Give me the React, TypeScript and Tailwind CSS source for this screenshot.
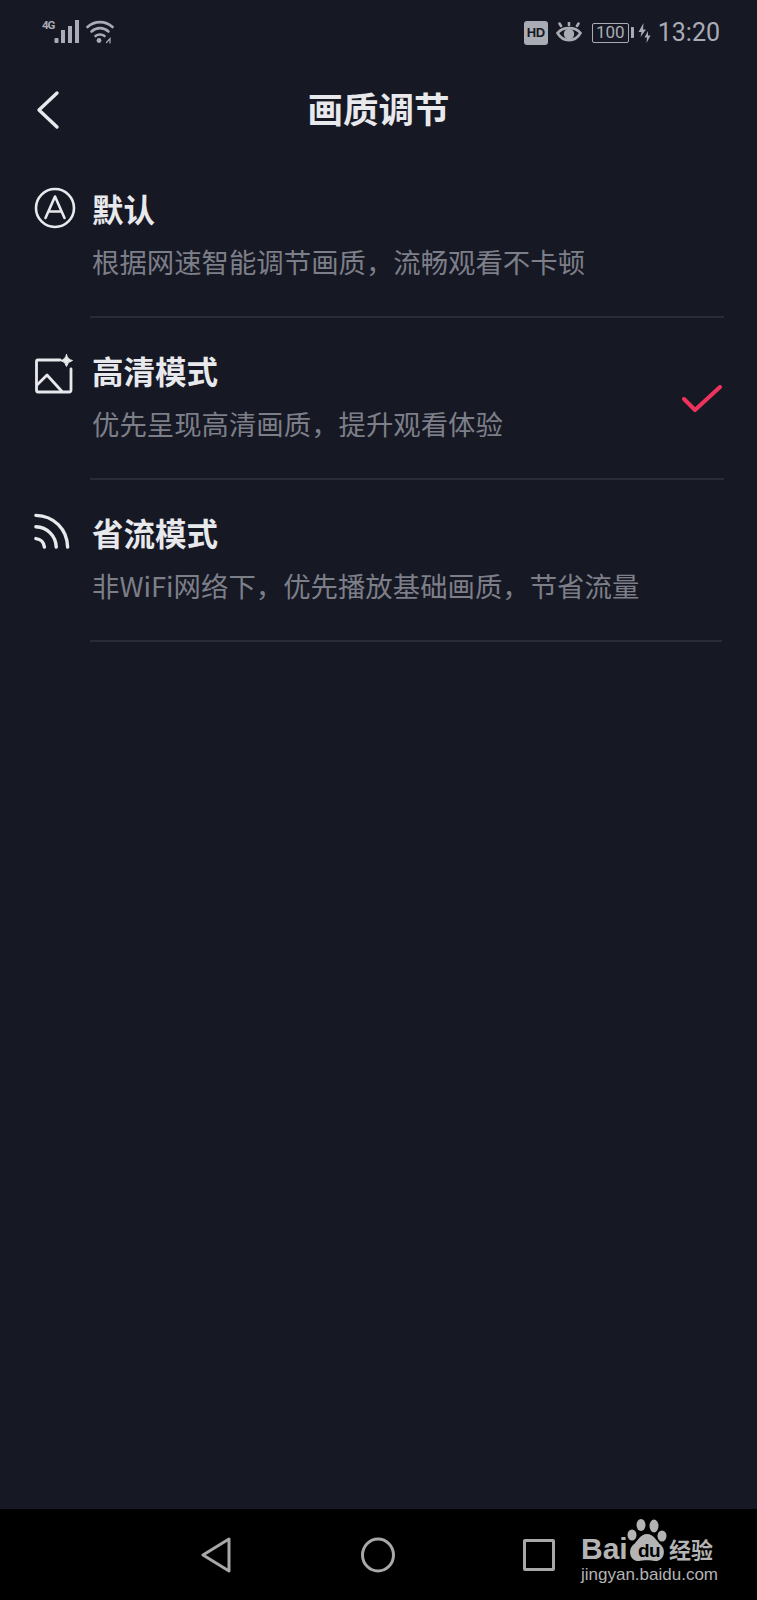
const CJK = "font-['Noto_Sans_CJK_SC','Noto_Sans',sans-serif]"

const ROWS = [
  { title: '默认', desc: '根据网速智能调节画质，流畅观看不卡顿', icon: 'auto' },
  { title: '高清模式', desc: '优先呈现高清画质，提升观看体验', icon: 'hd', checked: true },
  { title: '省流模式', desc: '非WiFi网络下，优先播放基础画质，节省流量', icon: 'save' },
]

function RowIcon({ name }: { name: string }) {
  if (name === 'auto') {
    return (
      <svg width="42" height="42" viewBox="0 0 42 42" fill="none" stroke="#e8e9ec" strokeWidth="2.6" strokeLinecap="round" strokeLinejoin="round">
        <circle cx="21" cy="21" r="19" />
        <path d="M11.5 31 L21 9.5 L30.5 31 M14.5 24.5 H27.5" />
      </svg>
    )
  }
  if (name === 'hd') {
    return (
      <svg width="40" height="40" viewBox="0 0 40 40" fill="none" stroke="#e8e9ec" strokeWidth="2.8" strokeLinecap="round" strokeLinejoin="round" className="mt-[5px]">
        <path d="M26 6 H4 Q2.5 6 2.5 7.5 V36 Q2.5 38 4 38 H35 Q37 38 37 36 V15" />
        <path d="M3 31 L13 21 L28 37.5" />
        <path d="M32.5 0.5 Q33.5 5.5 38.5 6.5 Q33.5 7.5 32.5 12.5 Q31.5 7.5 26.5 6.5 Q31.5 5.5 32.5 0.5 Z" fill="#e8e9ec" strokeWidth="1" />
      </svg>
    )
  }
  return (
    <svg width="36" height="36" viewBox="0 0 38 38" fill="none" stroke="#e8e9ec" strokeWidth="3.6" strokeLinecap="round" className="mt-[2px]">
      <path d="M2 2.5 C21 3 35 17 35.5 36" />
      <path d="M2 14.5 C14 15 23 24 23.5 36" />
      <path d="M2 27 C7 27.5 10.5 31 11 36" />
    </svg>
  )
}

function StatusBar() {
  return (
    <div className="flex h-[66px] items-start justify-between pl-[42px] pr-[37px] pt-[20px] text-[#a9acb5]">
      <div className="flex items-start">
        <span className="w-[12px] font-['Roboto',sans-serif] text-[11.5px] font-bold leading-[10px] tracking-[-1px]">4G</span>
        <svg width="26" height="24" viewBox="0 0 26 24" fill="#a9acb5">
          <rect x="0.5" y="18" width="4" height="5" rx="1" />
          <rect x="7" y="10" width="4" height="13" />
          <rect x="14" y="6" width="4" height="17" />
          <rect x="21" y="0" width="4" height="23" />
        </svg>
        <svg width="28" height="24" viewBox="0 0 28 24" fill="none" stroke="#a9acb5" strokeWidth="2.6" strokeLinecap="round" className="ml-[6px]">
          <path d="M1.5 7 C8.5 0.5 19.5 0.5 26.5 7" />
          <path d="M5.5 11.5 C10.5 7 17.5 7 22.5 11.5" />
          <path d="M9.5 16 C12 14 16 14 18.5 16" />
          <circle cx="13" cy="20.5" r="2.4" fill="#a9acb5" stroke="none" />
          <path d="M20.5 22.5 L24 18.5 V23" strokeWidth="1.2" />
        </svg>
      </div>
      <div className="flex items-center">
        <span className="flex h-[24px] w-[24px] items-center justify-center rounded-[3px] bg-[#a9acb5] font-['Liberation_Sans',sans-serif] text-[13px] font-bold tracking-[-0.5px] text-[#161824]">HD</span>
        <svg width="26" height="22" viewBox="0 0 26 22" fill="none" stroke="#a9acb5" strokeWidth="2.6" strokeLinecap="round" className="ml-[8px]">
          <path d="M1.5 11 C7 4.5 19 4.5 24.5 11 C19 20.5 7 20.5 1.5 11 Z" />
          <circle cx="13" cy="12" r="5.2" fill="#a9acb5" stroke="none" />
          <path d="M5 4 L3.5 1.5 M13 3 V0.5 M21 4 L22.5 1.5" />
        </svg>
        <span className="ml-[10px] flex h-[20px] w-[37px] items-center justify-center rounded-[2px] border border-[#a9acb5] font-['Roboto',sans-serif] text-[17px] leading-none">100</span>
        <span className="ml-[2px] h-[11px] w-[3px] rounded-r-[1px] bg-[#a9acb5]" />
        <svg width="13" height="22" viewBox="0 0 13 22" fill="#a9acb5" className="ml-[4px]">
          <path d="M5.5 1 L0.5 10 H3.5 L2.5 15 L8 7.5 H5 Z" />
          <path d="M10 9 L6.5 15.5 H9 L8.5 21 L12.5 13.5 H10 Z" />
        </svg>
        <span className="ml-[7px] font-['Roboto',sans-serif] text-[25px] leading-none">13:20</span>
      </div>
    </div>
  )
}

function Header() {
  return (
    <div className="relative flex h-[90px] items-center justify-center pb-[6px]">
      <svg width="24" height="40" viewBox="0 0 24 40" fill="none" stroke="#e8e9ec" strokeWidth="3.4" strokeLinecap="round" strokeLinejoin="round" className="absolute left-[36px] top-[24px]">
        <path d="M21 3 L3 20 L21 37" />
      </svg>
      <h1 className={`${CJK} text-[35.5px] leading-none font-bold text-[#e8e9ec]`}>画质调节</h1>
    </div>
  )
}

function NavBar() {
  return (
    <div className="relative flex h-[91px] items-center bg-black">
      <svg width="30" height="36" viewBox="0 0 30 36" fill="none" stroke="#a8a8a8" strokeWidth="3" strokeLinejoin="round" className="ml-[201px]">
        <path d="M28 2 L2 18 L28 34 Z" />
      </svg>
      <svg width="36" height="36" viewBox="0 0 36 36" fill="none" stroke="#a8a8a8" strokeWidth="3" className="ml-[129px]">
        <ellipse cx="18" cy="18" rx="15.5" ry="16" />
      </svg>
      <span className="ml-[127px] h-[32px] w-[32px] rounded-[2px] border-[3px] border-[#a8a8a8]" />

      {/* baidu watermark */}
      <div className="absolute left-[581px] top-[10px] h-[74px] w-[136px] text-[#b4b4b4]">
        <span className="absolute left-0 top-[15px] font-['Liberation_Sans',sans-serif] text-[30px] leading-none font-bold">Bai</span>
        <svg width="40" height="43" viewBox="0 0 40 43" fill="#b4b4b4" className="absolute left-[46px] top-0">
          <ellipse cx="14" cy="6" rx="4.5" ry="6" />
          <ellipse cx="27" cy="7" rx="4.5" ry="6.5" />
          <ellipse cx="5" cy="16" rx="4.5" ry="5.5" />
          <ellipse cx="35" cy="17" rx="4.5" ry="5.5" />
          <path d="M20 15 C27 15 29 22 34 26 C40 32 36 43 28 42 C24 41 16 41 12 42 C4 43 0 32 6 26 C11 22 13 15 20 15 Z" />
        </svg>
        <span className="absolute left-[57px] top-[22px] font-['Liberation_Sans',sans-serif] text-[19px] leading-none font-bold tracking-[-0.5px] text-black">du</span>
        <span className={`${CJK} absolute left-[88px] top-[18px] text-[22px] leading-none font-bold`}>经验</span>
        <span className="absolute left-0 top-[47px] whitespace-nowrap font-['Liberation_Sans',sans-serif] text-[17px] leading-none">jingyan.baidu.com</span>
      </div>
    </div>
  )
}

export default function App() {
  return (
    <div className={`${CJK} flex h-[1600px] w-[757px] flex-col overflow-hidden bg-[#161824]`}>
      <StatusBar />
      <Header />
      <div className="flex-1">
        {ROWS.map(row => (
          <div key={row.title} className="group flex h-[162px] pl-[34px]">
            <div className="w-[55px] shrink-0 pt-[31px]">
              <RowIcon name={row.icon} />
            </div>
            <div className="relative mr-[33px] ml-[1px] flex-1 border-b-2 border-[#292b37] pt-[32px] pl-[2px] group-last:mr-[35px]">
              <div className="text-[31.5px] leading-[40px] font-bold text-[#e8e9ec]">{row.title}</div>
              <div className="mt-[13px] text-[27.4px] leading-[40px] text-[#7d7f88]">{row.desc}</div>
              {row.checked && (
                <svg width="40" height="28" viewBox="0 0 40 28" fill="none" stroke="#f0335c" strokeWidth="4" strokeLinecap="round" strokeLinejoin="round" className="absolute right-[2px] top-[67px]">
                  <path d="M2 14 L13 25 L38 2" />
                </svg>
              )}
            </div>
          </div>
        ))}
      </div>
      <NavBar />
    </div>
  )
}
